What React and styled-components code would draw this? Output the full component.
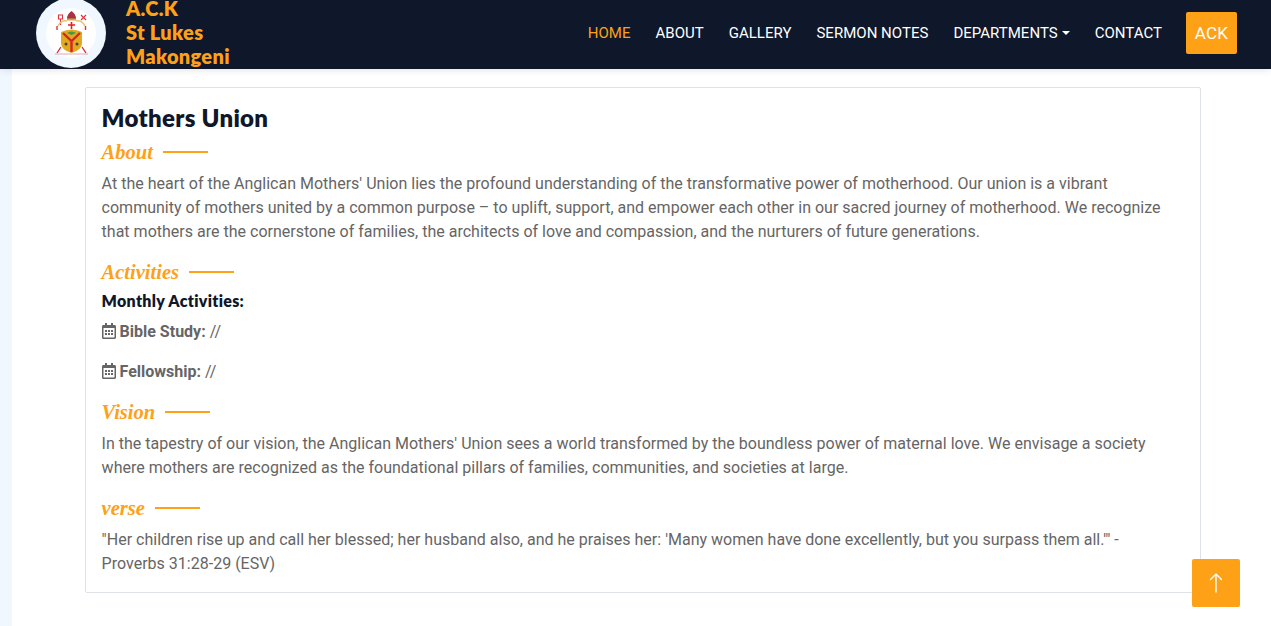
import React from 'react';
import styled, { createGlobalStyle } from 'styled-components';
import { FaRegCalendarAlt } from 'react-icons/fa';
import { BsArrowUp } from 'react-icons/bs';

const ORANGE = '#FEA116';
const DARK = '#0F172B';
const HEADING_FONT = '"Lato", "Open Sans", sans-serif';

const GlobalStyle = createGlobalStyle`
  * {
    box-sizing: border-box;
  }

  html,
  body {
    margin: 0;
    height: 100%;
    overflow: hidden;
    background: #fff;
  }

  body {
    color: #666565;
    font-family: 'Roboto', sans-serif;
    font-size: 16px;
    line-height: 24px;
  }
`;

const Navbar = styled.nav`
  display: flex;
  align-items: center;
  justify-content: space-between;
  height: 69px;
  padding: 0 34px 3px 36px;
  overflow: hidden;
  position: relative;
  z-index: 2;
  background: ${DARK};
  box-shadow: 0 0 8px rgba(0, 0, 0, 0.14);
`;

const Brand = styled.a`
  display: flex;
  align-items: center;
  gap: 20px;
  text-decoration: none;
`;

const LogoBadge = styled.div`
  display: flex;
  align-items: center;
  justify-content: center;
  flex: none;
  width: 70px;
  height: 70px;
  border-radius: 50%;
  background: #f0f7ff;

  svg {
    width: 50px;
    height: 50px;
  }
`;

const BrandName = styled.div`
  margin-top: -2px;
  color: ${ORANGE};
  font-family: ${HEADING_FONT};
  font-size: 20px;
  font-weight: 800;
  line-height: 24px;
  letter-spacing: 0.3px;
`;

const NavMenu = styled.div`
  display: flex;
  align-items: center;
  gap: 25px;
`;

const NavLink = styled.a`
  display: flex;
  align-items: center;
  color: ${({ $active }) => ($active ? ORANGE : '#fff')};
  font-size: 15px;
  font-weight: 400;
  line-height: 21px;
  letter-spacing: 0.02px;
  text-transform: uppercase;
`;

const Caret = styled.span`
  width: 0;
  height: 0;
  margin-left: 4px;
  border-top: 4px solid #fff;
  border-left: 4px solid transparent;
  border-right: 4px solid transparent;
`;

const AckButton = styled.a`
  display: flex;
  align-items: center;
  justify-content: center;
  width: 51px;
  height: 42px;
  margin-left: -1px;
  border-radius: 2px;
  background: ${ORANGE};
  color: #fff;
  font-size: 17px;
  letter-spacing: 0.3px;
`;

const Page = styled.div`
  display: flex;
  min-height: 557px;
`;

const SideStrip = styled.div`
  flex: none;
  width: 12px;
  background: #f0f7ff;
`;

const Main = styled.main`
  width: 1116px;
  margin: 18px 0 0 73px;
`;

const Card = styled.section`
  padding: 16px 16px 16px 15.6px;
  border: 1px solid #dee2e6;
  border-radius: 2px;
  background: #fff;
`;

const Title = styled.h2`
  margin: -1px 0 8px;
  color: ${DARK};
  font-family: ${HEADING_FONT};
  font-size: 24px;
  font-weight: 800;
  line-height: 29px;
  letter-spacing: 0.3px;
`;

const SectionHead = styled.h5`
  display: flex;
  align-items: center;
  margin: 0 0 8px;
  color: ${ORANGE};
  font-family: 'Liberation Serif', serif;
  font-size: 20.5px;
  font-style: italic;
  font-weight: 700;
  line-height: 24px;

  &::after {
    content: '';
    width: 45px;
    height: 2px;
    margin-left: 10px;
    background: ${ORANGE};
  }
`;

const Text = styled.p`
  margin: 0 0 16px;
  letter-spacing: 0.01px;

  &:last-child {
    margin-bottom: 0;
  }
`;

const SubHead = styled.h6`
  margin: -1px 0 10px;
  color: ${DARK};
  font-family: ${HEADING_FONT};
  font-size: 16px;
  font-weight: 800;
  line-height: 19px;
  letter-spacing: 0.3px;
`;

const Activity = styled.p`
  margin: 0 0 16px;

  svg {
    width: 14px;
    height: 16px;
    vertical-align: -2px;
  }

  strong {
    font-weight: 700;
  }
`;

const BackToTop = styled.a`
  position: fixed;
  right: 31px;
  bottom: 19px;
  z-index: 3;
  display: flex;
  align-items: center;
  justify-content: center;
  width: 48px;
  height: 48px;
  border-radius: 2px;
  background: ${ORANGE};
  color: #fff;
  font-size: 22px;
`;

const Logo = () => (
  <svg viewBox="0 0 50 50" aria-label="A.C.K crest">
    <circle cx="25" cy="25" r="25" fill="#fff" />
    <path d="M21 11 Q21 6 25.5 3 Q30 6 30 11 Z" fill="#a8324a" />
    <rect x="21" y="10.5" width="9" height="2" fill="#d9a441" />
    <path d="M12.5 7 h4 v4 h-4 z M14.5 11 v6" fill="none" stroke="#d8343f" strokeWidth="1.1" />
    <path d="M35 7 l5 5 M40 7 l-5 5" stroke="#d8343f" strokeWidth="1.1" />
    <path d="M21 13 Q15 12 12 18 M30 13 Q36 12 39 18" fill="none" stroke="#e9c46a" strokeWidth="1.5" />
    <path d="M11 18 v4 M39.5 18 v4" stroke="#d8343f" strokeWidth="1.4" />
    <path d="M25.5 14 v7 M22 17 h7" stroke="#d8232a" strokeWidth="1.6" />
    <path d="M15 24 Q25.5 19 36 24 V35 Q36 42 25.5 45 Q15 42 15 35 Z" fill="#e0a91f" />
    <path d="M21 25 Q25.5 22 30 25 L25.5 27 Z" fill="#3f9a45" />
    <path d="M17 25 L25.5 33 L34 25 M25.5 33 V44" fill="none" stroke="#d8232a" strokeWidth="2.4" />
    <path d="M15 39 L11 45 M36 39 L40 45" stroke="#d8232a" strokeWidth="1.3" />
    <path d="M9 46 H42" stroke="#e8a0b0" strokeWidth="1" />
    <circle cx="20" cy="36" r="1.5" fill="#4a4038" />
    <circle cx="31" cy="36" r="1.5" fill="#4a4038" />
  </svg>
);

const App = () => (
  <>
    <GlobalStyle />
    <Navbar>
      <Brand>
        <LogoBadge>
          <Logo />
        </LogoBadge>
        <BrandName>
          A.C.K
          <br />
          St Lukes
          <br />
          Makongeni
        </BrandName>
      </Brand>
      <NavMenu>
        <NavLink $active>Home</NavLink>
        <NavLink>About</NavLink>
        <NavLink>Gallery</NavLink>
        <NavLink>Sermon Notes</NavLink>
        <NavLink>
          Departments
          <Caret />
        </NavLink>
        <NavLink>Contact</NavLink>
        <AckButton>ACK</AckButton>
      </NavMenu>
    </Navbar>
    <Page>
      <SideStrip />
      <Main>
        <Card>
          <Title>Mothers Union</Title>
          <SectionHead>About</SectionHead>
          <Text>
            At the heart of the Anglican Mothers' Union lies the profound understanding of the transformative power of
            motherhood. Our union is a vibrant community of mothers united by a common purpose – to uplift, support, and
            empower each other in our sacred journey of motherhood. We recognize that mothers are the cornerstone of
            families, the architects of love and compassion, and the nurturers of future generations.
          </Text>
          <SectionHead>Activities</SectionHead>
          <SubHead>Monthly Activities:</SubHead>
          <Activity>
            <FaRegCalendarAlt /> <strong>Bible Study:</strong> //
          </Activity>
          <Activity>
            <FaRegCalendarAlt /> <strong>Fellowship:</strong> //
          </Activity>
          <SectionHead>Vision</SectionHead>
          <Text>
            In the tapestry of our vision, the Anglican Mothers' Union sees a world transformed by the boundless power of
            maternal love. We envisage a society where mothers are recognized as the foundational pillars of families,
            communities, and societies at large.
          </Text>
          <SectionHead>verse</SectionHead>
          <Text>
            "Her children rise up and call her blessed; her husband also, and he praises her: 'Many women have done
            excellently, but you surpass them all.'" - Proverbs 31:28-29 (ESV)
          </Text>
        </Card>
      </Main>
    </Page>
    <BackToTop>
      <BsArrowUp />
    </BackToTop>
  </>
);

export default App;
